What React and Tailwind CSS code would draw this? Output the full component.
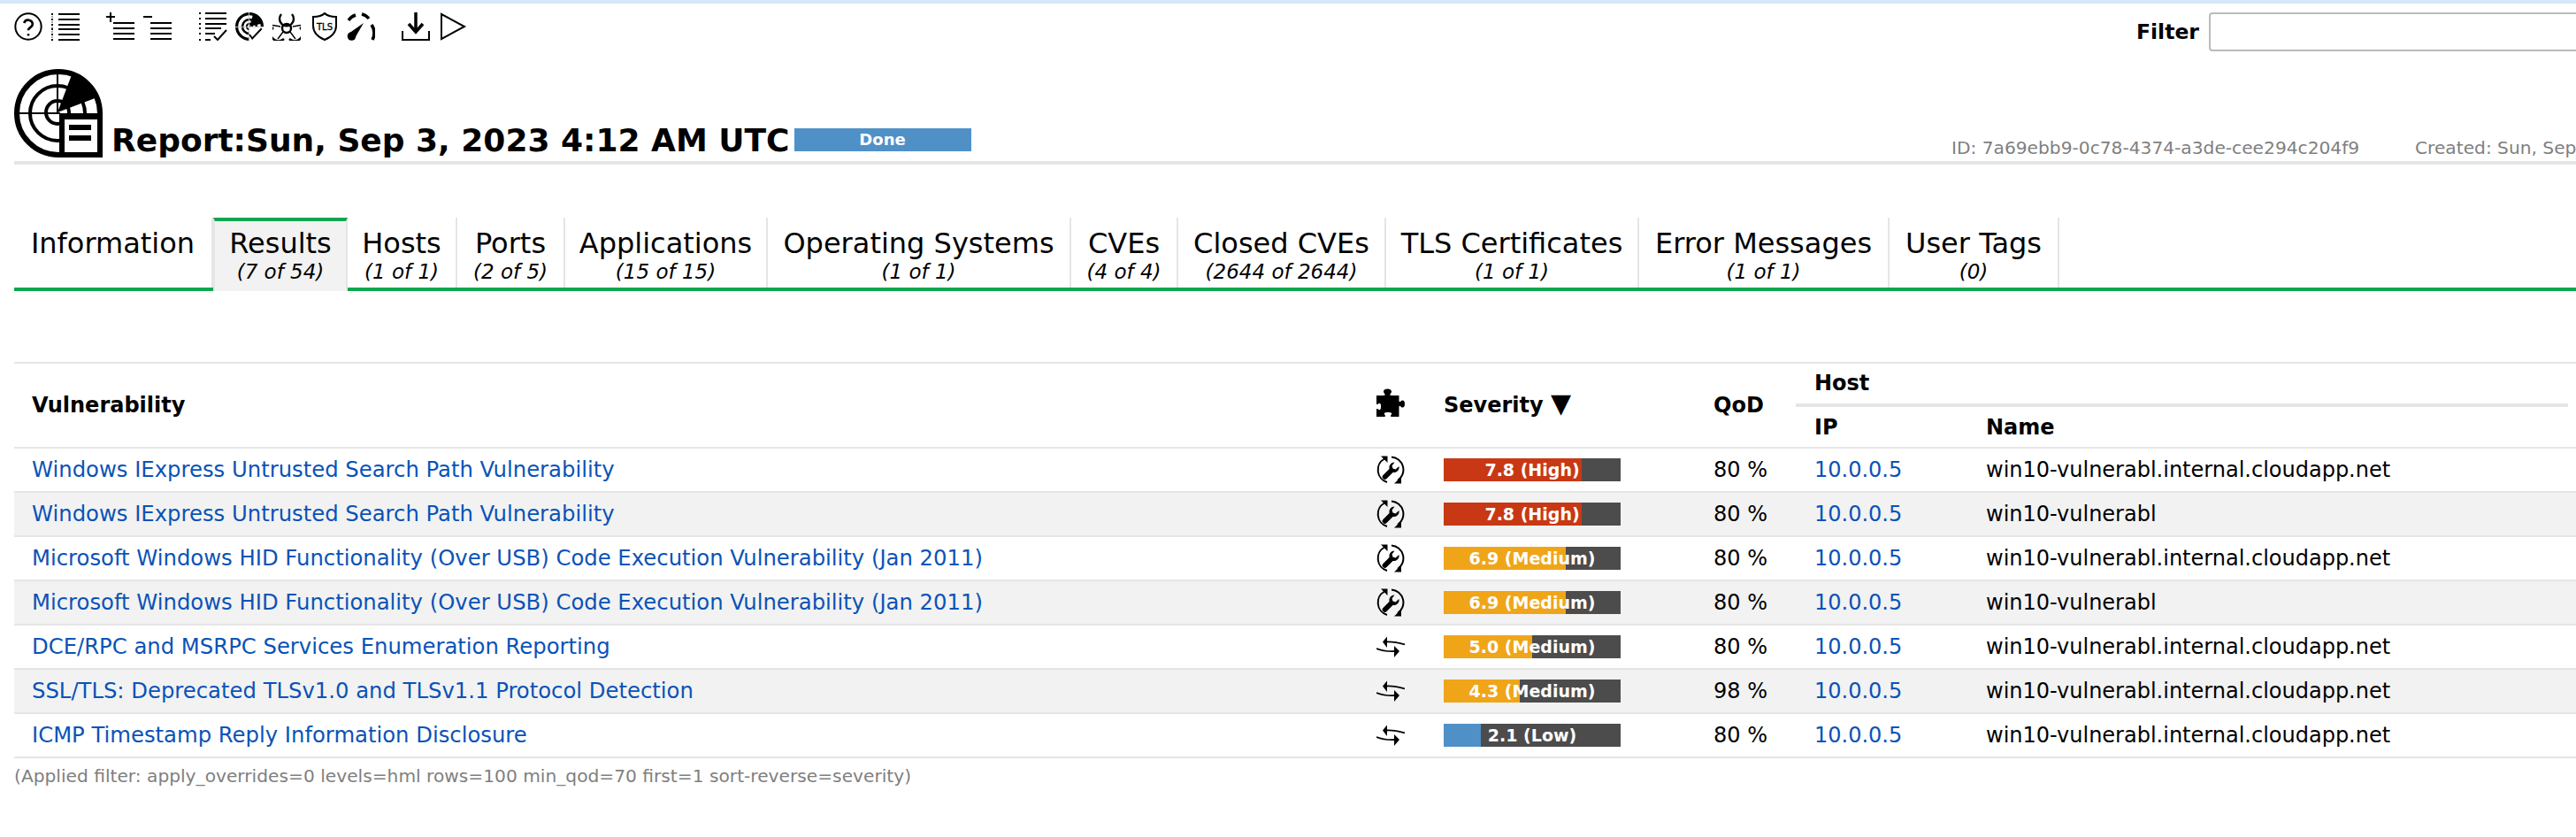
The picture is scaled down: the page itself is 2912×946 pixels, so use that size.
import React from "react";

const F = "[font-family:'DejaVu_Sans',Verdana,sans-serif]";

function Svg({ className = "", children, size = 32, vb = 32 }) {
  return (
    <svg width={size} height={size} viewBox={`0 0 ${vb} ${vb}`} fill="none" stroke="black" className={`block shrink-0 ${className}`}>
      {children}
    </svg>
  );
}

function Help({ className }) {
  return (
    <Svg className={className} vb={24}>
      <circle cx="12" cy="12" r="11" strokeWidth="1.5" />
      <path d="M8.4 9a3.7 3.7 0 0 1 7.2 1.2c0 2.4-3.6 2.6-3.6 5" strokeWidth="2" />
      <path d="M12 18.2v1.6" strokeWidth="2" />
    </Svg>
  );
}

function ListIcon({ className }) {
  const ys = [2, 8, 14, 19, 25, 31];
  return (
    <Svg className={className}>
      {ys.map((y) => (
        <g key={y}>
          <path d={`M8 ${y}H32`} strokeWidth="2" />
          <path d={`M0 ${y}H2`} strokeWidth="2" />
          <path d={`M0 ${y + 3}H2`} strokeWidth="1" stroke="#555" />
        </g>
      ))}
    </Svg>
  );
}

function PlusList({ className }) {
  return (
    <Svg className={className}>
      <path d="M5 0V11M0 5H10" strokeWidth="2" />
      <path d="M8 12H32M8 18H32M8 24H32M8 30H32" strokeWidth="2" />
    </Svg>
  );
}

function MinusList({ className }) {
  return (
    <Svg className={className}>
      <path d="M0 5H10" strokeWidth="2" />
      <path d="M8 12H32M8 18H32M8 24H32M8 30H32" strokeWidth="2" />
    </Svg>
  );
}

function ResultsIcon({ className }) {
  return (
    <Svg className={className}>
      <path d="M7 1H31M7 7H31M7 13H31M7 18H25M7 24H18M7 31H13" strokeWidth="2" />
      <path d="M0 1H2M0 7H2M0 13H2M0 18H2M0 24H2M0 31H2" strokeWidth="2" />
      <path d="M17 27l4 4 10-11" strokeWidth="2" />
    </Svg>
  );
}

function RadarCheck({ className }) {
  return (
    <Svg className={className} vb={100}>
      <path d="M50 95A45 45 0 1 1 95 50" strokeWidth="10" />
      <path d="M50 75A25 25 0 1 1 75 50" strokeWidth="8" />
      <path d="M50 60A10 10 0 1 1 60 50" strokeWidth="6" />
      <path d="M50 50L64 3A48 48 0 0 1 98 38Z" fill="black" stroke="none" />
      <path d="M0 52H100" stroke="#c8c8c8" strokeWidth="3" />
      <path d="M48 0V100" stroke="#c8c8c8" strokeWidth="3" />
      <path d="M52 56H100V100H52Z" fill="white" stroke="none" />
      <path d="M50 78l10 14 33-35" strokeWidth="6" />
    </Svg>
  );
}

function BioIcon({ className }) {
  return (
    <Svg className={className}>
      <circle cx="16" cy="18" r="5" strokeWidth="2.4" />
      <path d="M10 2A8 8 0 1 0 22 2" strokeWidth="2.4" />
      <path d="M1 17A8 8 0 1 0 13 30" strokeWidth="2.4" />
      <path d="M31 17A8 8 0 1 1 19 30" strokeWidth="2.4" />
      <path d="M0 14.5L9 16M32 14.5L23 16" strokeWidth="1.4" />
      <path d="M12 22L6 30M20 22L26 30" strokeWidth="1.4" />
    </Svg>
  );
}

function TlsIcon({ className }) {
  return (
    <Svg className={className}>
      <path d="M16 1C13 4 8 5 3 5V15C3 23 9 28 16 31C23 28 29 23 29 15V5C24 5 19 4 16 1Z" strokeWidth="2" />
      <text x="16" y="19.5" textAnchor="middle" fontFamily="'DejaVu Sans',sans-serif" fontSize="10" fill="black" stroke="black" strokeWidth="0.3">TLS</text>
    </Svg>
  );
}

function GaugeIcon({ className }) {
  return (
    <Svg className={className}>
      <path d="M2 9A15 15 0 0 1 10 3" strokeWidth="3.5" />
      <path d="M17 2A15 15 0 0 1 25 7" strokeWidth="3.5" />
      <path d="M28 14A17 17 0 0 1 29 31" strokeWidth="3.5" />
      <path d="M19 12L2 24L8 31Z" fill="black" stroke="none" />
      <circle cx="5.5" cy="27" r="4.8" fill="black" stroke="none" />
    </Svg>
  );
}

function Download({ className }) {
  return (
    <Svg className={className}>
      <path d="M1 21V31H31V21" strokeWidth="2" />
      <path d="M16 0V20" strokeWidth="3.5" />
      <path d="M8 13L16 22L24 13" strokeWidth="3.5" />
    </Svg>
  );
}

function Play({ className }) {
  return (
    <Svg className={className}>
      <path d="M3 2V30L29 16Z" strokeWidth="2" />
    </Svg>
  );
}

function Logo() {
  return (
    <svg width="100" height="100" viewBox="0 0 100 100" className="block shrink-0">
      <path d="M3 50A47 47 0 0 1 97 50V97H50A47 47 0 0 1 3 50Z" fill="white" stroke="black" strokeWidth="6" />
      <path d="M49 19A31 31 0 1 0 49 81A31 31 0 1 0 49 19Z" fill="none" stroke="black" strokeWidth="4" />
      <path d="M49 36A13 13 0 1 0 49 62A13 13 0 1 0 49 36Z" fill="none" stroke="black" strokeWidth="4" />
      <path d="M49 2V50M2 50H52" stroke="black" strokeWidth="2" fill="none" />
      <path d="M49 49L66 4A50 50 0 0 1 94 32Z" fill="black" />
      <path d="M51 50H100V100H51Z" fill="black" />
      <path d="M57 57H94V94H57Z" fill="white" />
      <path d="M62 63H87V69H62ZM62 75H87V81H62Z" fill="black" />
    </svg>
  );
}

function Puzzle() {
  return (
    <svg width="32" height="32" viewBox="0 0 32 32" className="block mx-0">
      <path
        d="M0 8H8C9 8 10 7.5 9.5 6.5C9 5.5 8 5 8 3.5C8 1.5 10 0.5 12.5 0.5C15 0.5 17 1.5 17 3.5C17 5 16 5.5 15.5 6.5C15 7.5 16 8 17 8H25.5V14C25.5 15 26.5 15.5 27 15C28 14 28.5 13.5 29.5 13.5C31 13.5 32 15 32 17.5C32 20 31 21.5 29.5 21.5C28.5 21.5 28 21 27 20C26.5 19.5 25.5 20 25.5 21V32H17C16 32 15.5 31 16.5 30C17 29.5 17.5 29 17 28C16.5 27.3 15 27 13 27C11 27 9.5 27.3 9 28C8.5 29 9 29.5 9.5 30C10.5 31 10 32 9 32H0V24C0 23 1 22.5 2 23.5C2.5 24 3 24.5 4 24C5 23.5 5 22 5 20.5C5 19 5 17.5 4 17C3 16.5 2.5 17 2 17.5C1 18.5 0 18 0 17Z"
        fill="black"
      />
    </svg>
  );
}

function Wrench() {
  return (
    <svg width="32" height="32" viewBox="0 0 32 32" fill="none" stroke="black" className="block">
      <path d="M9 3.5A14.5 14.5 0 0 0 12 30" strokeWidth="2" />
      <path d="M17 1.5A14.5 14.5 0 0 1 24 28" strokeWidth="2" />
      <path d="M5 0.5H12.5V8Z" fill="black" stroke="none" />
      <path d="M20 31.5H28V24Z" fill="black" stroke="none" />
      <path d="M20.5 7.5A6 6 0 0 0 14.5 15L7.5 22A2.8 2.8 0 0 0 11.5 26L18.5 19A6 6 0 0 0 25.5 12L21.5 15.5L18.5 14.5L17.5 11.5Z" fill="black" stroke="none" />
    </svg>
  );
}

function Workaround() {
  return (
    <svg width="32" height="24" viewBox="0 0 32 24" fill="none" stroke="black" className="block">
      <path d="M10 6.5C16 6 24 7 32 9.5" strokeWidth="1.8" />
      <path d="M12 0.5L7 6.5L12 13Z" fill="black" stroke="none" />
      <path d="M0 14C7 17 14 17.5 22 17" strokeWidth="1.8" />
      <path d="M20 11L26 17L20 24Z" fill="black" stroke="none" />
    </svg>
  );
}

function SeverityBar({ value, label, color }) {
  return (
    <div className="relative w-[200px] h-[26px] bg-[#4c4c4c]">
      <div className={`h-full ${color}`} style={{ width: `${value * 20}px` }} />
      <div className={`absolute inset-0 flex items-center justify-center text-white font-bold text-[19px] leading-none ${F}`}>
        {label}
      </div>
    </div>
  );
}

const TABS = [
  ["Information", null, "w-[225px]"],
  ["Results", "7 of 54", "w-[152px]"],
  ["Hosts", "1 of 1", "w-[124px]"],
  ["Ports", "2 of 5", "w-[122px]"],
  ["Applications", "15 of 15", "w-[229px]"],
  ["Operating Systems", "1 of 1", "w-[343px]"],
  ["CVEs", "4 of 4", "w-[121px]"],
  ["Closed CVEs", "2644 of 2644", "w-[235px]"],
  ["TLS Certificates", "1 of 1", "w-[286px]"],
  ["Error Messages", "1 of 1", "w-[283px]"],
  ["User Tags", "0", "w-[192px]"],
];

const LONG = "win10-vulnerabl.internal.cloudapp.net";
const ROWS = [
  ["Windows IExpress Untrusted Search Path Vulnerability", "w", 7.8, "7.8 (High)", "bg-[#c83814]", "80 %", LONG],
  ["Windows IExpress Untrusted Search Path Vulnerability", "w", 7.8, "7.8 (High)", "bg-[#c83814]", "80 %", "win10-vulnerabl"],
  ["Microsoft Windows HID Functionality (Over USB) Code Execution Vulnerability (Jan 2011)", "w", 6.9, "6.9 (Medium)", "bg-[#f0a519]", "80 %", LONG],
  ["Microsoft Windows HID Functionality (Over USB) Code Execution Vulnerability (Jan 2011)", "w", 6.9, "6.9 (Medium)", "bg-[#f0a519]", "80 %", "win10-vulnerabl"],
  ["DCE/RPC and MSRPC Services Enumeration Reporting", "a", 5.0, "5.0 (Medium)", "bg-[#f0a519]", "80 %", LONG],
  ["SSL/TLS: Deprecated TLSv1.0 and TLSv1.1 Protocol Detection", "a", 4.3, "4.3 (Medium)", "bg-[#f0a519]", "98 %", LONG],
  ["ICMP Timestamp Reply Information Disclosure", "a", 2.1, "2.1 (Low)", "bg-[#4f91c7]", "80 %", LONG],
];

export default function App() {
  return (
    <div className={`w-[2912px] h-[946px] overflow-hidden bg-white text-black ${F}`}>
      <div className="h-1 bg-[#d6e6fb]" />

      <div className="flex h-[74px]">
        <div className="w-[2415px] shrink-0 flex items-start pt-[10px] pl-4">
          <Help />
          <ListIcon className="ml-[10px]" />
          <PlusList className="ml-[30px]" />
          <MinusList className="ml-[10px]" />
          <ResultsIcon className="ml-[31px]" />
          <RadarCheck className="ml-[9px]" />
          <BioIcon className="ml-[10px]" />
          <TlsIcon className="ml-[11px]" />
          <GaugeIcon className="ml-[9px]" />
          <Download className="ml-[30px]" />
          <Play className="ml-[10px]" />
        </div>
        <div className="flex items-start pt-[10px] shrink-0">
          <span className="font-bold text-[23.5px] leading-[44px] w-[82px]">Filter</span>
          <div className="w-[500px] h-[44px] border-2 border-[#bbbbbb] rounded-[4px] bg-white" />
        </div>
      </div>

      <div className="flex items-end h-[100px] ml-4 mr-0">
        <div className="flex items-end w-[2190px] shrink-0">
          <Logo />
          <span className="ml-[10px] text-[36px] font-bold leading-[36px] mb-[1px] whitespace-nowrap">
            Report:Sun, Sep 3, 2023 4:12 AM UTC
          </span>
          <div className="ml-[5px] w-[200px] h-[26px] mb-[7px] bg-[#4f91c7] text-white font-bold text-[18px] leading-[26px] text-center">
            Done
          </div>
        </div>
        <div className="flex shrink-0 whitespace-nowrap text-[20.2px] leading-[24px] text-[#7f7f7f] mb-[-1px]">
          <span className="w-[524px]">ID: 7a69ebb9-0c78-4374-a3de-cee294c204f9</span>
          <span>Created: Sun, Sep 3, 2023 4:12 AM UTC</span>
        </div>
      </div>

      <div className="mt-1 ml-4 h-1 bg-[#e5e5e5]" />

      <div className="mt-[60px] ml-4 flex border-b-4 border-[#10a64f] h-[83px]">
        {TABS.map(([name, count, w], i) => {
          const active = i === 1;
          return (
            <div
              key={name}
              className={`${w} shrink-0 text-center relative ${active ? "bg-[#f2f2f2] border-t-4 border-[#10a64f] h-[83px] pt-[6px] border-x-2 border-x-[#e5e5e5]" : "h-[79px] pt-[10px] border-r-2 border-[#e5e5e5]"} ${i === 0 ? "border-r-0" : ""}`}
            >
              <div className="text-[32px] leading-[38px] whitespace-nowrap">{name}</div>
              {count !== null && <div className="text-[23px] leading-[26px] italic whitespace-nowrap">({count})</div>}
            </div>
          );
        })}
      </div>

      <table className="mt-[80px] ml-4 w-[2896px] table-fixed border-separate border-spacing-0 border-t-2 border-[#e5e5e5] text-[24px] text-left">
        <colgroup>
          <col className="w-[1524px]" />
          <col className="w-[76px]" />
          <col className="w-[304px]" />
          <col className="w-[110px]" />
          <col className="w-[198px]" />
          <col />
        </colgroup>
        <thead>
          <tr>
            <th rowSpan={2} className="pl-5 border-b-2 border-[#e5e5e5] font-bold">Vulnerability</th>
            <th rowSpan={2} className="pl-4 border-b-2 border-[#e5e5e5]"><div className="-translate-y-[3px]"><Puzzle /></div></th>
            <th rowSpan={2} className="pl-4 border-b-2 border-[#e5e5e5] font-bold">
              <span>Severity</span> <span className="text-[30px] leading-none">▼</span>
            </th>
            <th rowSpan={2} className="pl-[17px] border-b-2 border-[#e5e5e5] font-bold">QoD</th>
            <th colSpan={2} className="p-0 font-bold">
              <div className="mr-[9px] h-[49px] border-b-4 border-[#e5e5e5] pl-[21px] leading-[44px]">Host</div>
            </th>
          </tr>
          <tr>
            <th className="pl-[21px] h-[47px] border-b-2 border-[#e5e5e5] font-bold">IP</th>
            <th className="pl-[17px] h-[47px] border-b-2 border-[#e5e5e5] font-bold">Name</th>
          </tr>
        </thead>
        <tbody>
          {ROWS.map((r, i) => {
            const bg = i % 2 === 1 ? "bg-[#f2f2f2]" : "bg-white";
            const cell = `h-[50px] border-b-2 border-[#e5e5e5] ${bg} p-0`;
            return (
              <tr key={i}>
                <td className={`${cell} pl-5 text-[#0a53b7] text-[24.3px] whitespace-nowrap`}>{r[0]}</td>
                <td className={`${cell} pl-4`}>{r[1] === "w" ? <Wrench /> : <Workaround />}</td>
                <td className={`${cell} pl-4`}><SeverityBar value={r[2]} label={r[3]} color={r[4]} /></td>
                <td className={`${cell} pl-[17px]`}>{r[5]}</td>
                <td className={`${cell} pl-[21px] text-[#0a53b7]`}>10.0.0.5</td>
                <td className={`${cell} pl-[17px] whitespace-nowrap`}>{r[6]}</td>
              </tr>
            );
          })}
        </tbody>
      </table>

      <div className="ml-4 mt-2 text-[20.2px] leading-[24px] text-[#7f7f7f] whitespace-nowrap">
        (Applied filter: apply_overrides=0 levels=hml rows=100 min_qod=70 first=1 sort-reverse=severity)
      </div>
    </div>
  );
}
